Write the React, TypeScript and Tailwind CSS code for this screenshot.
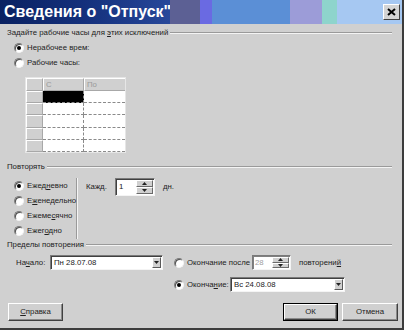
import React from "react";

function Radio({ checked }: { checked?: boolean }) {
  return (
    <span className="flex h-[10px] w-[10px] shrink-0 items-center justify-center rounded-full border border-t-[#7a7a7a] border-l-[#7a7a7a] border-r-[#f4f4f4] border-b-[#f4f4f4] bg-white shadow-[inset_1px_1px_0_#505050]">
      {checked && <span className="h-[4px] w-[4px] rounded-full bg-black" />}
    </span>
  );
}

function GroupHeader({ children }: { children: React.ReactNode }) {
  return (
    <div className="flex h-[12px] items-center mr-[10px]">
      <span className="whitespace-nowrap">{children}</span>
      <div className="ml-[2px] h-0 flex-1 border-t border-b border-t-[#9a9a9a] border-b-[#f4f4f4]" />
    </div>
  );
}

function Tri({ up }: { up?: boolean }) {
  return (
    <svg width="5" height="3" viewBox="0 0 5 3">
      <polygon points={up ? "2.5,0 5,3 0,3" : "0,0 5,0 2.5,3"} fill="#222" />
    </svg>
  );
}

function SpinBtns() {
  return (
    <div className="flex w-[17px] flex-col">
      <div className="flex flex-1 items-center justify-center border border-t-white border-l-white border-r-[#6a6a6a] border-b-[#6a6a6a] bg-[#d0d0d0]">
        <Tri up />
      </div>
      <div className="flex flex-1 items-center justify-center border border-t-white border-l-white border-r-[#6a6a6a] border-b-[#6a6a6a] bg-[#d0d0d0]">
        <Tri />
      </div>
    </div>
  );
}

function Combo({ value, cls }: { value: string; cls: string }) {
  return (
    <div className={`flex border border-t-[#7a7a7a] border-l-[#7a7a7a] border-r-[#f4f4f4] border-b-[#f4f4f4] bg-white shadow-[inset_1px_1px_0_#404040] ${cls}`}>
      <div className="flex flex-1 items-center pl-[3px] pt-[1px]">{value}</div>
      <div className="my-[1px] mr-[1px] flex w-[9px] items-center justify-center border border-t-white border-l-white border-r-[#5a5a5a] border-b-[#5a5a5a] bg-[#d0d0d0]">
        <Tri />
      </div>
    </div>
  );
}

function Btn({ children, cls, def }: { children: React.ReactNode; cls: string; def?: boolean }) {
  return (
    <div className={`flex h-[18px] items-center justify-center ${def ? "border border-black" : ""} ${cls}`}>
      <div className="flex h-full w-full items-center justify-center border border-t-white border-l-white border-r-[#404040] border-b-[#404040] bg-[#d0d0d0] shadow-[inset_-1px_-1px_0_#8a8a8a]">
        {children}
      </div>
    </div>
  );
}

const rows = [0, 1, 2, 3, 4];

export default function App() {
  return (
    <div className="flex h-[330px] w-[404px] flex-col overflow-hidden border-r-2 border-b-2 border-r-[#3c3c3c] border-b-[#3c3c3c] bg-[#d0d0d0] font-['Liberation_Sans',Arial,sans-serif] text-[7.8px] leading-none text-[#222]">
      {/* Title bar */}
      <div className="flex h-[24px] shrink-0">
        <div className="flex w-[170px] items-center bg-gradient-to-r from-[#0a2262] via-[#14307c] to-[#27489a] pl-[4px]">
          <span className="whitespace-nowrap text-[16px] font-bold text-white">Сведения о "Отпуск"</span>
        </div>
        <div className="w-[30px] bg-[#5c6094]" />
        <div className="w-[12px] bg-[#6a6ae2]" />
        <div className="w-[78px] bg-[#5b8fd6]" />
        <div className="w-[32px] bg-[#9c9cd8]" />
        <div className="w-[15px] bg-[#8ed4cc]" />
        <div className="flex flex-1 items-center justify-end bg-[#a6c8f2]">
          <div className="flex h-[16px] w-[17px] items-center justify-center border border-t-white border-l-white border-r-[#404040] border-b-[#404040] bg-[#d4d4d4]">
            <svg width="9" height="8" viewBox="0 0 9 8">
              <path d="M1 1 L8 7 M8 1 L1 7" stroke="#000" strokeWidth="2" />
            </svg>
          </div>
          <div className="w-[2px]" />
        </div>
      </div>

      {/* Body */}
      <div className="flex flex-col pl-[7px]">
        <div className="mt-[3px]">
          <GroupHeader>
            Задайте рабочие часы для <span className="underline">э</span>тих исключений
          </GroupHeader>
        </div>
        <div className="mt-[3px] ml-[7px] flex h-[12px] items-center gap-[3px]">
          <Radio checked />
          <span>Нерабочее врем:</span>
        </div>
        <div className="mt-[3px] ml-[7px] flex h-[12px] items-center gap-[3px]">
          <Radio />
          <span>Рабочие часы:</span>
        </div>

        {/* Table */}
        <div className="mt-[8px] ml-[18px] flex h-[76px] w-[101px] flex-col border border-[#e6e6e6] bg-[#d0d0d0]">
          <div className="flex h-[13px]">
            <div className="w-[17px] border-r border-b border-r-[#a8a8a8] border-b-[#a8a8a8] border-t border-l border-t-white border-l-white" />
            <div className="flex w-[41px] items-center border-r border-b border-r-[#a8a8a8] border-b-[#a8a8a8] border-t border-l border-t-white border-l-white pl-[2px] text-[#9a9a9a]">С</div>
            <div className="flex flex-1 items-center border-b border-b-[#a8a8a8] border-t border-l border-t-white border-l-white pl-[2px] text-[#9a9a9a]">По</div>
          </div>
          {rows.map((r) => (
            <div key={r} className="flex flex-1">
              <div className="w-[17px] border-r border-b border-r-[#a8a8a8] border-b-[#a8a8a8] border-t border-l border-t-white border-l-white" />
              <div className={`w-[41px] border-r border-b border-dashed border-[#8a8a8a] ${r === 0 ? "bg-black" : "bg-white"}`} />
              <div className="flex-1 border-b border-dashed border-[#8a8a8a] bg-white" />
            </div>
          ))}
        </div>

        <div className="mt-[8px]">
          <GroupHeader>Повторять</GroupHeader>
        </div>

        {/* Repeat section */}
        <div className="mt-[5px] flex h-[61px]">
          <div className="flex w-[70px] flex-col border-r border-r-[#9a9a9a]">
            {[
              { l: <>Ежед<span className="underline">н</span>евно</>, c: true },
              { l: <>Е<span className="underline">ж</span>енедельно</>, c: false },
              { l: <>Ежеме<span className="underline">с</span>ячно</>, c: false },
              { l: <>Ежег<span className="underline">о</span>дно</>, c: false },
            ].map((it, i) => (
              <div key={i} className="ml-[7px] flex h-[15px] items-center gap-[3px]">
                <Radio checked={it.c} />
                <span className="whitespace-nowrap">{it.l}</span>
              </div>
            ))}
          </div>
          <div className="w-px bg-[#f4f4f4]" />
          <div className="flex items-start pl-[8px]">
            <div className="flex h-[18px] items-center">
              <span className="w-[29px]">Кажд.</span>
              <div className="flex h-[18px] w-[40px] border border-t-[#7a7a7a] border-l-[#7a7a7a] border-r-[#f4f4f4] border-b-[#f4f4f4] bg-white shadow-[inset_1px_1px_0_#404040]">
                <div className="flex flex-1 items-center pl-[3px]">1</div>
                <div className="my-[1px] mr-[1px] flex">
                  <SpinBtns />
                </div>
              </div>
              <span className="ml-[8px]">дн.</span>
            </div>
          </div>
        </div>

        <GroupHeader>Пределы повторения</GroupHeader>

        <div className="mt-[4px] flex h-[15px] items-center">
          <span className="ml-[9px] w-[34px]">На<span className="underline">ч</span>ало:</span>
          <Combo value="Пн 28.07.08" cls="h-[15px] w-[113px]" />
          <div className="ml-[11px] flex items-center gap-[3px]">
            <Radio />
            <span className="w-[65px] whitespace-nowrap">Окончание после</span>
          </div>
          <div className="flex h-[15px] w-[39px] border border-t-[#7a7a7a] border-l-[#7a7a7a] border-r-[#f4f4f4] border-b-[#f4f4f4] bg-white shadow-[inset_1px_1px_0_#808080]">
            <div className="flex flex-1 items-center pl-[2px] text-[#a0a0a0]">28</div>
            <div className="my-[1px] mr-[1px] flex">
              <SpinBtns />
            </div>
          </div>
          <span className="ml-[8px]">повторени<span className="underline">й</span></span>
        </div>

        <div className="mt-[7px] flex h-[15px] items-center">
          <div className="ml-[167px] flex items-center gap-[3px]">
            <Radio checked />
            <span className="w-[43px] whitespace-nowrap">Оконча<span className="underline">н</span>ие:</span>
          </div>
          <Combo value="Вс 24.08.08" cls="h-[15px] w-[115px]" />
        </div>

        <div className="mt-[11px] flex h-[18px] items-center">
          <Btn cls="ml-[1px] w-[55px]">
            <span><span className="underline">С</span>правка</span>
          </Btn>
          <div className="flex-1" />
          <Btn cls="w-[55px]" def>
            ОК
          </Btn>
          <Btn cls="ml-[4px] mr-[4px] w-[56px]">Отмена</Btn>
        </div>
      </div>
    </div>
  );
}
